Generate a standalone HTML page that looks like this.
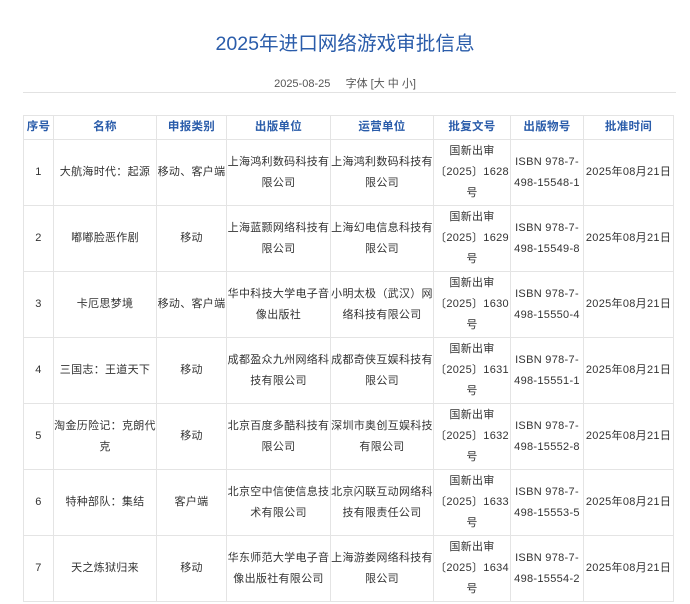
<!DOCTYPE html>
<html><head><meta charset="utf-8"><style>
body{margin:0;background:#fff;font-family:"Liberation Sans","Noto Sans CJK SC",sans-serif;color:#333;}
h1{margin:0;position:absolute;top:27px;left:0;width:690px;text-align:center;font-size:19.6px;font-weight:normal;color:#2a5caa;}
.meta{position:absolute;top:75px;left:0;width:690px;text-align:center;font-size:11px;color:#555;}
.hr{position:absolute;top:92px;left:23px;width:653px;height:1px;background:#e2e2e2;}
table{position:absolute;top:115px;left:23px;border-collapse:collapse;table-layout:fixed;font-size:11px;}
td,th{border:1px solid #e4e4e4;text-align:center;vertical-align:middle;line-height:21px;padding:0;white-space:nowrap;overflow:hidden;letter-spacing:0.3px;}
th{height:23px;color:#2a5caa;font-weight:bold;font-size:11.5px;}
td{height:65px;}
</style></head><body>
<h1>2025年进口网络游戏审批信息</h1>
<div class="meta">2025-08-25&nbsp;&nbsp;&nbsp;&nbsp;&nbsp;字体 [大 中 小]</div>
<div class="hr"></div>
<table>
<colgroup><col style="width:30px"><col style="width:103px"><col style="width:70px"><col style="width:104px"><col style="width:103px"><col style="width:77px"><col style="width:73px"><col style="width:90px"></colgroup>
<tr><th>序号</th><th>名称</th><th>申报类别</th><th>出版单位</th><th>运营单位</th><th>批复文号</th><th>出版物号</th><th>批准时间</th></tr>
<tr><td>1</td><td>大航海时代：起源</td><td>移动、客户端</td><td>上海鸿利数码科技有<br>限公司</td><td>上海鸿利数码科技有<br>限公司</td><td>国新出审<br>〔2025〕1628<br>号</td><td>ISBN 978-7-<br>498-15548-1</td><td>2025年08月21日</td></tr>
<tr><td>2</td><td>嘟嘟脸恶作剧</td><td>移动</td><td>上海蓝颢网络科技有<br>限公司</td><td>上海幻电信息科技有<br>限公司</td><td>国新出审<br>〔2025〕1629<br>号</td><td>ISBN 978-7-<br>498-15549-8</td><td>2025年08月21日</td></tr>
<tr><td>3</td><td>卡厄思梦境</td><td>移动、客户端</td><td>华中科技大学电子音<br>像出版社</td><td>小明太极（武汉）网<br>络科技有限公司</td><td>国新出审<br>〔2025〕1630<br>号</td><td>ISBN 978-7-<br>498-15550-4</td><td>2025年08月21日</td></tr>
<tr><td>4</td><td>三国志：王道天下</td><td>移动</td><td>成都盈众九州网络科<br>技有限公司</td><td>成都奇侠互娱科技有<br>限公司</td><td>国新出审<br>〔2025〕1631<br>号</td><td>ISBN 978-7-<br>498-15551-1</td><td>2025年08月21日</td></tr>
<tr><td>5</td><td>淘金历险记：克朗代<br>克</td><td>移动</td><td>北京百度多酷科技有<br>限公司</td><td>深圳市奥创互娱科技<br>有限公司</td><td>国新出审<br>〔2025〕1632<br>号</td><td>ISBN 978-7-<br>498-15552-8</td><td>2025年08月21日</td></tr>
<tr><td>6</td><td>特种部队：集结</td><td>客户端</td><td>北京空中信使信息技<br>术有限公司</td><td>北京闪联互动网络科<br>技有限责任公司</td><td>国新出审<br>〔2025〕1633<br>号</td><td>ISBN 978-7-<br>498-15553-5</td><td>2025年08月21日</td></tr>
<tr><td>7</td><td>天之炼狱归来</td><td>移动</td><td>华东师范大学电子音<br>像出版社有限公司</td><td>上海游娄网络科技有<br>限公司</td><td>国新出审<br>〔2025〕1634<br>号</td><td>ISBN 978-7-<br>498-15554-2</td><td>2025年08月21日</td></tr>
</table>
</body></html>
